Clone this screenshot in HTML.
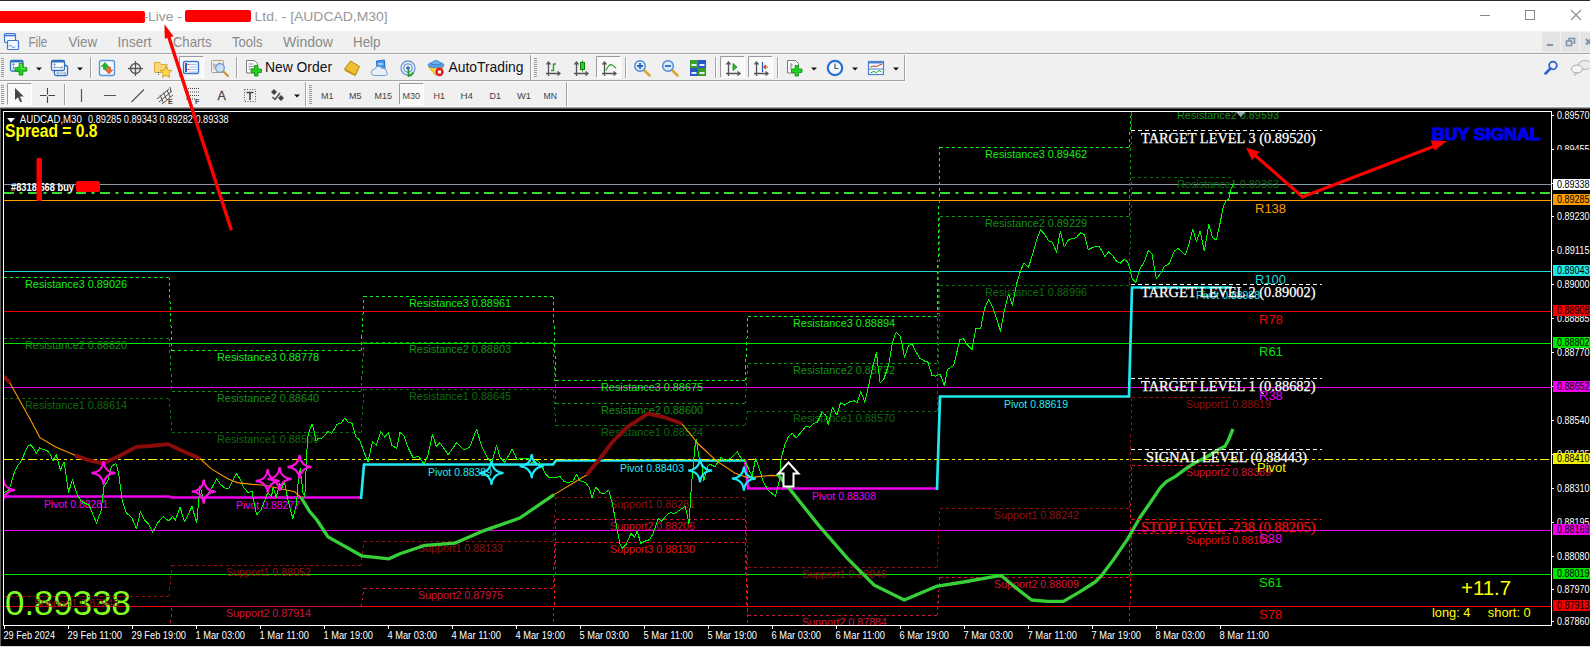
<!DOCTYPE html><html><head><meta charset="utf-8"><title>AUDCAD,M30</title><style>
html,body{margin:0;padding:0;}
body{width:1590px;height:647px;overflow:hidden;background:#f0f0f0;font-family:"Liberation Sans",sans-serif;position:relative;}
.abs{position:absolute;}
#title{left:0;top:0;width:1590px;height:31px;background:#fff;}
#topline{left:0;top:0;width:1590px;height:1px;background:#2b2b2b;}
.tt{position:absolute;top:7px;font-size:14px;color:#999;white-space:nowrap;line-height:18px;}
.mi{position:absolute;top:33px;font-size:13.5px;color:#8a8a8a;white-space:nowrap;line-height:18px;}
.tb{position:absolute;font-size:13.5px;color:#111;white-space:nowrap;line-height:18px;}
.tf{position:absolute;font-size:10px;color:#333;white-space:nowrap;line-height:12px;top:89px;}
svg{position:absolute;left:0;top:0;}
svg text{white-space:pre;}
</style></head><body>
<div id="title" class="abs"></div><div id="topline" class="abs"></div>
<div class="abs" style="left:0;top:11px;width:145px;height:12px;border-radius:0 2px 2px 0;background:#fe0000"></div>
<div class="abs" style="left:185px;top:10px;width:66px;height:12px;border-radius:2px;background:#fe0000"></div>
<svg width="1590" height="108" viewBox="0 0 1590 108" font-family="Liberation Sans, sans-serif">
<g font-size="13.3" fill="#979797">
<text x="143.5" y="20.800" textLength="38.3" lengthAdjust="spacingAndGlyphs">-Live -</text>
<text x="254.6" y="20.800" textLength="133" lengthAdjust="spacingAndGlyphs">Ltd. - [AUDCAD,M30]</text>
</g><g font-size="14.2" fill="#8a8a8a">
<text x="28.4" y="46.700" textLength="18.9" lengthAdjust="spacingAndGlyphs">File</text>
<text x="68.4" y="46.700" textLength="28.6" lengthAdjust="spacingAndGlyphs">View</text>
<text x="117.6" y="46.700" textLength="33.9" lengthAdjust="spacingAndGlyphs">Insert</text>
<text x="172.9" y="46.700" textLength="38.6" lengthAdjust="spacingAndGlyphs">Charts</text>
<text x="232" y="46.700" textLength="30.5" lengthAdjust="spacingAndGlyphs">Tools</text>
<text x="283" y="46.700" textLength="50" lengthAdjust="spacingAndGlyphs">Window</text>
<text x="353" y="46.700" textLength="27.5" lengthAdjust="spacingAndGlyphs">Help</text>
</g>
<g stroke="#8a8a8a" stroke-width="1" fill="none" shape-rendering="crispEdges">
<line x1="1480" y1="15.5" x2="1490" y2="15.5"/>
<rect x="1525.5" y="10.5" width="9" height="9"/>
</g>
<path d="M1571 10l10 10M1581 10l-10 10" stroke="#8a8a8a" stroke-width="1.1" fill="none"/>
<rect x="1542" y="32" width="18" height="20" fill="#e4e4e4"/><rect x="1561" y="32" width="18" height="20" fill="#e4e4e4"/><rect x="1580" y="32" width="10" height="20" fill="#e4e4e4"/>
<rect x="1547" y="44" width="6" height="2" fill="#7f93aa"/>
<g fill="none" stroke="#7f93aa" stroke-width="1.6"><rect x="1566.5" y="41" width="5" height="4.5"/><path d="M1569 40.5v-2h5.5v4.5h-2"/></g>
<path d="M1586 39l5 5.5m0-5.5l-5 5.5" stroke="#7f93aa" stroke-width="2" fill="none"/>
<rect x="0" y="53" width="1590" height="1" fill="#a3a3a3"/><rect x="0" y="54" width="1590" height="1" fill="#fdfdfd"/>
<rect x="0" y="80" width="905" height="1" fill="#a3a3a3"/><rect x="0" y="81" width="906" height="1" fill="#fdfdfd"/>
<g fill="#9a9a9a"><rect x="1" y="58" width="3" height="1"/><rect x="1" y="60" width="3" height="1"/><rect x="1" y="62" width="3" height="1"/><rect x="1" y="64" width="3" height="1"/><rect x="1" y="66" width="3" height="1"/><rect x="1" y="68" width="3" height="1"/><rect x="1" y="70" width="3" height="1"/><rect x="1" y="72" width="3" height="1"/><rect x="1" y="74" width="3" height="1"/><rect x="1" y="76" width="3" height="1"/></g>
<rect x="90" y="57" width="1" height="21" fill="#a3a3a3"/><rect x="91" y="57" width="1" height="21" fill="#fdfdfd"/>
<rect x="236" y="57" width="1" height="21" fill="#a3a3a3"/><rect x="237" y="57" width="1" height="21" fill="#fdfdfd"/>
<rect x="625" y="57" width="1" height="21" fill="#a3a3a3"/><rect x="626" y="57" width="1" height="21" fill="#fdfdfd"/>
<rect x="715" y="57" width="1" height="21" fill="#a3a3a3"/><rect x="716" y="57" width="1" height="21" fill="#fdfdfd"/>
<rect x="777" y="57" width="1" height="21" fill="#a3a3a3"/><rect x="778" y="57" width="1" height="21" fill="#fdfdfd"/>
<rect x="530" y="55" width="1" height="25" fill="#a3a3a3"/><rect x="531" y="55" width="1" height="25" fill="#fdfdfd"/>
<g fill="#9a9a9a"><rect x="534" y="58" width="3" height="1"/><rect x="534" y="60" width="3" height="1"/><rect x="534" y="62" width="3" height="1"/><rect x="534" y="64" width="3" height="1"/><rect x="534" y="66" width="3" height="1"/><rect x="534" y="68" width="3" height="1"/><rect x="534" y="70" width="3" height="1"/><rect x="534" y="72" width="3" height="1"/><rect x="534" y="74" width="3" height="1"/><rect x="534" y="76" width="3" height="1"/></g>
<rect x="904" y="55" width="1" height="26" fill="#a3a3a3"/><rect x="905" y="55" width="1" height="26" fill="#fdfdfd"/>
<g fill="#f4f8ff" stroke="#3f74d8" stroke-width="1.2"><rect x="4.5" y="33.5" width="11" height="9" rx="1"/><rect x="7.5" y="40.5" width="11" height="9" rx="1"/></g>
<path d="M9 46.500q1.500-3 3 0t3 0" fill="none" stroke="#3f74d8" stroke-width="1"/><path d="M4.500 35.500h11" stroke="#3f74d8" stroke-width="1.600"/>
<rect x="10.5" y="60.5" width="12.5" height="10.5" rx="1.5" fill="#fdfeff" stroke="#2f6fbe" stroke-width="1.300"/><path d="M10.500 61.700h12.5" stroke="#2f6fbe" stroke-width="1.600"/><path d="M13.500 63.500v5.500m-1.500-4l1.500-1.800 1.500 1.800m-3 2.500l1.500 1.800 1.500-1.800" stroke="#7a98b8" fill="none" stroke-width="0.900"/>
<path d="M19.100 63.500h3.800v3.900h3.900v3.800h-3.900v3.900h-3.800v-3.900h-3.900v-3.800h3.900z" fill="#1fd11f" stroke="#0a8a0a" stroke-width="0.800"/><path d="M20 64.500h1.200v4h4" stroke="#8af08a" stroke-width="0.800" fill="none"/>
<path d="M36 67.5h6l-3 3z" fill="#111"/>
<g fill="#fdfeff" stroke="#2f6fbe" stroke-width="1.300"><rect x="54.5" y="65.5" width="13" height="10" rx="1.5"/><rect x="51.5" y="60.5" width="13" height="10" rx="1.5"/></g><path d="M51.500 61.700h13" stroke="#2f6fbe" stroke-width="1.600"/><path d="M54.500 63.500v5M53.500 67.500h9M57 73h8.5" stroke="#7a98b8" stroke-width="0.900" fill="none"/><path d="M53.300 64.800l1.200-1.500 1.200 1.500M61.300 66.300l1.500 1.200-1.500 1.200M58.300 71.800l-1.500 1.200 1.500 1.200M64.300 71.800l1.500 1.200-1.500 1.200" stroke="#7a98b8" stroke-width="0.900" fill="none"/>
<path d="M77 67.5h6l-3 3z" fill="#111"/>
<rect x="99.5" y="60.5" width="15" height="15" rx="2" fill="#f4f8fe" stroke="#5a96dc" stroke-width="1.400"/><path d="M103.500 69.500v-3h-2.300l3.800-4 3.800 4h-2.300v3z" fill="#22b422" stroke="#0a800a" stroke-width="0.5"/><path d="M107.500 67v3h-2.300l3.800 4 3.800-4h-2.300v-3z" fill="#f06a30" stroke="#c03a10" stroke-width="0.5"/>
<g fill="none" stroke="#555" stroke-width="1.300"><circle cx="135.5" cy="68.5" r="5"/><path d="M135.500 61v15M128 68.500h15"/></g>
<path d="M154.500 62.500h5l1.500 2h6v8h-12.500z" fill="#f6d878" stroke="#d8a838" stroke-width="1"/><path d="M166 66.500l1.800 3.600 3.900.500-2.800 2.800.700 3.900-3.600-1.900-3.500 1.900.700-3.900-2.900-2.800 4-.500z" fill="#ffd84a" stroke="#c89820" stroke-width="0.900"/><path d="M158.500 72v4" stroke="#555" stroke-dasharray="1 1"/>
<rect x="179" y="56" width="25" height="22" fill="#f8f8f8"/><path d="M179.5 77.5V56.5H203.5" fill="none" stroke="#9c9c9c"/><path d="M179.5 77.5H203.5V56.5" fill="none" stroke="#fff"/>
<rect x="183.5" y="61.5" width="15" height="12" rx="1.5" fill="#fbfdff" stroke="#3c78c8" stroke-width="1.400"/><rect x="185" y="63" width="2" height="9" fill="#2a60b0"/><path d="M189 64.500h8M189 67h8M189 69.500h8M189 72h8" stroke="#9ab4e0" stroke-width="0.800"/><path d="M187.500 64.500h1.500M187.500 69.500h1.5" stroke="#e02020"/>
<rect x="211.5" y="60.5" width="12" height="12" rx="1" fill="#f4f0e8" stroke="#b0a080"/><path d="M214 63v6M219 62v6M213 65h8" stroke="#8a8a8a" stroke-width="0.800"/><circle cx="220" cy="68" r="4.300" fill="#c8dcf4" fill-opacity="0.850" stroke="#6a9ad8" stroke-width="1.300"/><path d="M223.500 71.500l4.500 4.5" stroke="#c8982a" stroke-width="2.200" stroke-linecap="round"/>
<path d="M246.500 60.500h8l3 3v9.500h-11z" fill="#fafafa" stroke="#7a7a7a"/><path d="M248.500 64h5M248.500 66.500h6M248.500 69h6" stroke="#9a9a9a"/><path d="M251 69h3.500v-3.500h3.500v3.500h3.500v3.500h-3.500v3.500h-3.500v-3.500h-3.500z" fill="#22d022" stroke="#0a900a" stroke-width="0.800"/>
<text x="265" y="72" font-size="13.800" fill="#10101a" textLength="67" lengthAdjust="spacingAndGlyphs">New Order</text>
<path d="M344.500 69l6-8 9 5.500-4 8.500z" fill="#f0c030" stroke="#b88410" stroke-width="1"/><path d="M344.500 69l11 6 .500 1.500-11-5.500z" fill="#c89018"/>
<path d="M376.500 61l8-1 .500 9-8 .500z" fill="#3a9af0" stroke="#2a70c8"/><path d="M378 64h5" stroke="#fff"/><path d="M374 75.500a3 3 0 0 1 .500-6 4 4 0 0 1 7.500-1 3.500 3.500 0 0 1 4.500 3.500 2 2 0 0 1-1 3.500z" fill="#e8f0fc" stroke="#7a9ad0" stroke-width="1"/>
<g fill="none" stroke="#6a9ad8" stroke-width="1.300"><circle cx="408" cy="68" r="7"/><circle cx="408" cy="68" r="4.200"/></g><circle cx="408" cy="68" r="1.800" fill="#2a60c8"/><path d="M408.500 69v7a7 7 0 0 0 5-3.5" fill="none" stroke="#30a030" stroke-width="1.800"/>
<path d="M428.500 67l7.500 8.500 7.500-8.500z" fill="#f8d040" stroke="#d8a020" stroke-width="0.800"/><ellipse cx="436" cy="65" rx="8" ry="2.800" fill="#5aa0e8" stroke="#3a78c8" stroke-width="0.800"/><path d="M431.500 64.500a4.500 4 0 0 1 9 0z" fill="#6ab0f0" stroke="#3a78c8" stroke-width="0.800"/><circle cx="439.5" cy="72" r="4.200" fill="#e02020"/><rect x="438" y="70.5" width="3" height="3" fill="#fff"/>
<text x="448.5" y="72" font-size="13.800" fill="#10101a" textLength="75" lengthAdjust="spacingAndGlyphs">AutoTrading</text>
<path d="M548.5 62v14M546 73.500h14M546.5 64.500l2-2.500 2 2.500M557.5 71.500l2.500 2-2.500 2" fill="none" stroke="#555" stroke-width="1.300"/>
<path d="M553.500 63.500v7.500M553.500 64h2.500M551 70.500h2.5" stroke="#20a020" stroke-width="1.400" fill="none"/>
<path d="M576.5 62v14M574 73.500h14M574.5 64.500l2-2.500 2 2.500M585.5 71.500l2.500 2-2.500 2" fill="none" stroke="#555" stroke-width="1.300"/>
<path d="M582.500 60.500v11" stroke="#108010"/><rect x="580.5" y="62.5" width="4" height="7" fill="#30d030" stroke="#108010"/>
<rect x="596" y="56" width="25" height="22" fill="#f8f8f8"/><path d="M596.5 77.5V56.5H620.5" fill="none" stroke="#9c9c9c"/><path d="M596.5 77.5H620.5V56.5" fill="none" stroke="#fff"/>
<path d="M604.5 62v14M602 73.500h14M602.5 64.500l2-2.500 2 2.500M613.5 71.500l2.500 2-2.500 2" fill="none" stroke="#555" stroke-width="1.300"/>
<path d="M606 70.500q3-7 6-5.500t4 3.5" stroke="#30a030" stroke-width="1.300" fill="none"/>
<path d="M644 70l5.500 5.5" stroke="#d8a828" stroke-width="2.600" stroke-linecap="round"/><circle cx="640" cy="66" r="5.300" fill="#dceafa" stroke="#4a88d8" stroke-width="1.400"/><path d="M637 66h6M640 63v6" stroke="#2a68c0" stroke-width="1.800"/>
<path d="M672 70l5.500 5.5" stroke="#d8a828" stroke-width="2.600" stroke-linecap="round"/><circle cx="668" cy="66" r="5.300" fill="#dceafa" stroke="#4a88d8" stroke-width="1.400"/><path d="M665 66h6" stroke="#2a68c0" stroke-width="1.800"/>
<rect x="690" y="60" width="8" height="8" fill="#38a028"/><rect x="698" y="60" width="8" height="8" fill="#2858c8"/><rect x="690" y="68" width="8" height="8" fill="#2858c8"/><rect x="698" y="68" width="8" height="8" fill="#38a028"/><path d="M691.500 65h5M699.500 65h5M691.500 73h5M699.500 73h5" stroke="#e8f0ff" stroke-width="2"/>
<rect x="720" y="56" width="25" height="22" fill="#f8f8f8"/><path d="M720.5 77.5V56.5H744.5" fill="none" stroke="#9c9c9c"/><path d="M720.5 77.5H744.5V56.5" fill="none" stroke="#fff"/>
<path d="M728.5 62v14M726 73.500h14M726.5 64.500l2-2.500 2 2.500M737.5 71.500l2.500 2-2.500 2" fill="none" stroke="#555" stroke-width="1.300"/>
<path d="M733 63.500l4 3.500-4 3.500z" fill="#30c030" stroke="#108010" stroke-width="0.800"/>
<rect x="748" y="56" width="25" height="22" fill="#f8f8f8"/><path d="M748.5 77.5V56.5H772.5" fill="none" stroke="#9c9c9c"/><path d="M748.5 77.5H772.5V56.5" fill="none" stroke="#fff"/>
<path d="M756.5 62v14M754 73.500h14M754.5 64.500l2-2.500 2 2.500M765.5 71.500l2.500 2-2.500 2" fill="none" stroke="#555" stroke-width="1.300"/>
<path d="M762.500 62v10" stroke="#2060c0" stroke-width="1.300"/><path d="M768 67h-4m2-2l-2 2 2 2" stroke="#d04010" stroke-width="1.200" fill="none"/>
<path d="M787.500 60.500h8l3 3v9.500h-11z" fill="#fafafa" stroke="#7a7a7a"/><path d="M791 63v7m0-5h2" stroke="#8a8a8a" fill="none"/><path d="M791.500 69h3.500v-3.500h3.500v3.500h3.500v3.500h-3.500v3.500h-3.500v-3.500h-3.500z" fill="#22d022" stroke="#0a900a" stroke-width="0.800"/>
<path d="M811 67.5h6l-3 3z" fill="#111"/>
<circle cx="835" cy="68" r="7.200" fill="#f4f8ff" stroke="#2a70d0" stroke-width="2.200"/><path d="M835 63.500v5h3.5" fill="none" stroke="#555" stroke-width="1.200"/>
<path d="M852 67.5h6l-3 3z" fill="#111"/>
<rect x="868.5" y="61.5" width="15" height="13" fill="#fafcff" stroke="#4a80d0" stroke-width="1.200"/><rect x="868" y="61" width="16" height="2.5" fill="#4a80d0"/><path d="M868.500 69h15" stroke="#4a80d0"/><path d="M870.500 67l3-1 3 .500 3-1.500 2.500-.5" stroke="#c03010" fill="none"/><path d="M870.500 73l3-1.500 3 1 2.500-2 2.500 1.5" stroke="#20a020" fill="none"/>
<path d="M893 67.5h6l-3 3z" fill="#111"/>
<circle cx="1553" cy="65.5" r="3.800" fill="none" stroke="#2a62d0" stroke-width="1.800"/><path d="M1550.500 68.500l-5 5" stroke="#2a62d0" stroke-width="2.600" stroke-linecap="round"/>
<ellipse cx="1585" cy="65" rx="6.5" ry="4.5" fill="#ececec" stroke="#b0b0b0"/><ellipse cx="1577" cy="69" rx="5.5" ry="4" fill="#f4f4f4" stroke="#a8a8a8"/><path d="M1575 72.500l-.500 3 3-2.500z" fill="#f4f4f4" stroke="#a8a8a8" stroke-width="0.800"/>
<g fill="#9a9a9a"><rect x="1" y="85" width="3" height="1"/><rect x="1" y="87" width="3" height="1"/><rect x="1" y="89" width="3" height="1"/><rect x="1" y="91" width="3" height="1"/><rect x="1" y="93" width="3" height="1"/><rect x="1" y="95" width="3" height="1"/><rect x="1" y="97" width="3" height="1"/><rect x="1" y="99" width="3" height="1"/><rect x="1" y="101" width="3" height="1"/><rect x="1" y="103" width="3" height="1"/></g>
<rect x="7" y="83" width="25" height="22" fill="#f8f8f8"/><path d="M7.5 104.5V83.5H31.5" fill="none" stroke="#9c9c9c"/><path d="M7.5 104.5H31.5V83.5" fill="none" stroke="#fff"/>
<path d="M15 88v12l3-2.800 2.300 5 1.800-.800-2.300-4.900h4z" fill="#444"/>
<path d="M47.500 88v15M40 95.500h15" stroke="#444" stroke-width="1.100"/><rect x="46.5" y="94.5" width="2" height="2" fill="#f0f0f0"/>
<rect x="64" y="84" width="1" height="21" fill="#a3a3a3"/><rect x="65" y="84" width="1" height="21" fill="#fdfdfd"/>
<path d="M81.500 89v13M104 95.500h12M131.500 102l12.500-12.5" stroke="#555" stroke-width="1.200" fill="none"/>
<path d="M157 99l12-10M159 102l13-11M162 104l11-9M160 95l3 7M163.500 92.500l3 7M167 90l3 7M170 87l1 5" stroke="#505050" stroke-width="1" fill="none"/><text x="168" y="104" font-size="7" font-weight="bold" fill="#444">E</text>
<path d="M186 88.500h14M186 92h14M186 95.500h14M186 99h9" stroke="#444" stroke-dasharray="1 1"/><text x="195" y="104" font-size="7" font-weight="bold" fill="#444">F</text>
<text x="217.5" y="100" font-size="12.5" fill="#4a4a4a" stroke="#4a4a4a" stroke-width="0.300">A</text>
<rect x="244.5" y="89.5" width="11" height="12" fill="none" stroke="#555" stroke-dasharray="1 1.5"/><path d="M246.500 92.500h7M250 92.500v7.5" stroke="#444" stroke-width="1.600"/>
<path d="M274 89l3 3-3 3-3-3z M281 95l3 3-3 3-3-3z" fill="#444"/><path d="M272.500 97l2.500 2.500 5-6.5" stroke="#444" stroke-width="1.400" fill="none"/>
<path d="M294 94.5h6l-3 3z" fill="#111"/>
<rect x="305" y="82" width="1" height="25" fill="#a3a3a3"/><rect x="306" y="82" width="1" height="25" fill="#fdfdfd"/>
<g fill="#9a9a9a"><rect x="309" y="85" width="3" height="1"/><rect x="309" y="87" width="3" height="1"/><rect x="309" y="89" width="3" height="1"/><rect x="309" y="91" width="3" height="1"/><rect x="309" y="93" width="3" height="1"/><rect x="309" y="95" width="3" height="1"/><rect x="309" y="97" width="3" height="1"/><rect x="309" y="99" width="3" height="1"/><rect x="309" y="101" width="3" height="1"/><rect x="309" y="103" width="3" height="1"/></g>
<rect x="399" y="83" width="25" height="22" fill="#f8f8f8"/><path d="M399.5 104.5V83.5H423.5" fill="none" stroke="#9c9c9c"/><path d="M399.5 104.5H423.5V83.5" fill="none" stroke="#fff"/>
<rect x="566" y="82" width="1" height="25" fill="#a3a3a3"/><rect x="567" y="82" width="1" height="25" fill="#fdfdfd"/>
<text x="321" y="98.5" font-size="9" fill="#444" textLength="12.5" lengthAdjust="spacingAndGlyphs">M1</text>
<text x="349" y="98.5" font-size="9" fill="#444" textLength="12.5" lengthAdjust="spacingAndGlyphs">M5</text>
<text x="374.5" y="98.5" font-size="9" fill="#444" textLength="17.5" lengthAdjust="spacingAndGlyphs">M15</text>
<text x="402.5" y="98.5" font-size="9" fill="#444" textLength="17.5" lengthAdjust="spacingAndGlyphs">M30</text>
<text x="433.5" y="98.5" font-size="9" fill="#444" textLength="11.5" lengthAdjust="spacingAndGlyphs">H1</text>
<text x="460.5" y="98.5" font-size="9" fill="#444" textLength="12.5" lengthAdjust="spacingAndGlyphs">H4</text>
<text x="489.5" y="98.5" font-size="9" fill="#444" textLength="11.5" lengthAdjust="spacingAndGlyphs">D1</text>
<text x="517" y="98.5" font-size="9" fill="#444" textLength="14" lengthAdjust="spacingAndGlyphs">W1</text>
<text x="543.5" y="98.5" font-size="9" fill="#444" textLength="13.5" lengthAdjust="spacingAndGlyphs">MN</text>
</svg>
<svg width="1590" height="647" viewBox="0 0 1590 647" font-family="Liberation Sans, sans-serif">
<rect x="0" y="107" width="1590" height="540" fill="#5a5a5a"/>
<rect x="0" y="106" width="1590" height="1" fill="#fbfbfb"/>
<rect x="0" y="107" width="1590" height="1" fill="#a0a0a0"/>
<rect x="1" y="109" width="1589" height="537" fill="#000"/>
<rect x="0" y="646" width="1590" height="1" fill="#d8d8d8"/>
<path d="M3.5 625.5V111.5H1551.5V625.5H3.5" fill="none" stroke="#fff" stroke-width="1" shape-rendering="crispEdges"/>
<defs><clipPath id="cc"><rect x="4" y="112" width="1547" height="513"/></clipPath></defs><g clip-path="url(#cc)">
<g shape-rendering="crispEdges">
<line x1="4" y1="184.5" x2="1551" y2="184.5" stroke="#8d99a6" stroke-width="1"/>
<line x1="4" y1="200.5" x2="1551" y2="200.5" stroke="#ff9c00" stroke-width="1"/>
<line x1="4" y1="271.5" x2="1551" y2="271.5" stroke="#1fd6d6" stroke-width="1"/>
<line x1="4" y1="311.5" x2="1551" y2="311.5" stroke="#f00000" stroke-width="1"/>
<line x1="4" y1="343.5" x2="1551" y2="343.5" stroke="#00e400" stroke-width="1"/>
<line x1="4" y1="387.5" x2="1551" y2="387.5" stroke="#e800e8" stroke-width="1"/>
<line x1="4" y1="530.5" x2="1551" y2="530.5" stroke="#e800e8" stroke-width="1"/>
<line x1="4" y1="574.5" x2="1551" y2="574.5" stroke="#00e400" stroke-width="1"/>
<line x1="4" y1="606.5" x2="1551" y2="606.5" stroke="#f00000" stroke-width="1"/>
</g>
<text x="5" y="615" fill="#80ff20" font-size="35" textLength="126" lengthAdjust="spacingAndGlyphs">0.89338</text>
<g fill="none" stroke-width="1" stroke-dasharray="3 3" shape-rendering="crispEdges">
<path d="M4 277.5H169" stroke="#14ee14"/>
<path d="M169 277.5L172 350.5M172 350.5H361" stroke="#14ee14"/>
<path d="M361 350.5L364 296.5M364 296.5H553" stroke="#14ee14"/>
<path d="M553 296.5L556 380.5M556 380.5H745" stroke="#14ee14"/>
<path d="M745 380.5L748 316.5M748 316.5H937" stroke="#14ee14"/>
<path d="M937 316.5L940 147.5M940 147.5H1129" stroke="#14ee14"/>
<path d="M4 338.5H169" stroke="#149014"/>
<path d="M169 338.5L172 391.5M172 391.5H361" stroke="#149014"/>
<path d="M361 391.5L364 342.5M364 342.5H553" stroke="#149014"/>
<path d="M553 342.5L556 403.5M556 403.5H745" stroke="#149014"/>
<path d="M745 403.5L748 363.5M748 363.5H937" stroke="#149014"/>
<path d="M937 363.5L940 216.5M940 216.5H1129" stroke="#149014"/>
<path d="M1129 216.5L1132 108.5M1132 108.5H1232" stroke="#149014"/>
<path d="M4 398.5H169" stroke="#0f6a0f"/>
<path d="M169 398.5L172 432.5M172 432.5H361" stroke="#0f6a0f"/>
<path d="M361 432.5L364 389.5M364 389.5H553" stroke="#0f6a0f"/>
<path d="M553 389.5L556 425.5M556 425.5H745" stroke="#0f6a0f"/>
<path d="M745 425.5L748 411.5M748 411.5H937" stroke="#0f6a0f"/>
<path d="M937 411.5L940 285.5M940 285.5H1129" stroke="#0f6a0f"/>
<path d="M1129 285.5L1132 177.5M1132 177.5H1232" stroke="#0f6a0f"/>
<path d="M4 596.5H169" stroke="#8a1414"/>
<path d="M169 596.5L172 565.5M172 565.5H361" stroke="#8a1414"/>
<path d="M361 565.5L364 541.5M364 541.5H553" stroke="#8a1414"/>
<path d="M553 541.5L556 497.5M556 497.5H745" stroke="#8a1414"/>
<path d="M745 497.5L748 567.5M748 567.5H937" stroke="#8a1414"/>
<path d="M937 567.5L940 508.5M940 508.5H1129" stroke="#8a1414"/>
<path d="M1129 508.5L1132 397.5M1132 397.5H1232" stroke="#8a1414"/>
<path d="M172 606.5H361" stroke="#d0143c"/>
<path d="M361 606.5L364 588.5M364 588.5H553" stroke="#d0143c"/>
<path d="M553 588.5L556 519.5M556 519.5H745" stroke="#d0143c"/>
<path d="M745 519.5L748 615.5M748 615.5H937" stroke="#d0143c"/>
<path d="M937 615.5L940 577.5M940 577.5H1129" stroke="#d0143c"/>
<path d="M1129 577.5L1132 465.5M1132 465.5H1232" stroke="#d0143c"/>
<path d="M556 542.5H745" stroke="#e01010"/>
<path d="M1132 533.5H1232" stroke="#e01010"/>
<path d="M169 640.5L172 606.5" stroke="#d0143c"/>
<path d="M553 640.5L556 542.5" stroke="#e01010"/>
<path d="M745 542.5L748 640.5" stroke="#e01010"/>
<path d="M1129 640.5L1132 533.5" stroke="#e01010"/>
<path d="M1129 147.5L1132 100.5" stroke="#14ee14"/>
</g>
<g font-size="10.5">
<text x="25" y="288" fill="#14ee14" textLength="102" lengthAdjust="spacingAndGlyphs">Resistance3 0.89026</text>
<text x="25" y="349" fill="#149014" textLength="102" lengthAdjust="spacingAndGlyphs">Resistance2 0.88820</text>
<text x="25" y="409" fill="#0f6a0f" textLength="102" lengthAdjust="spacingAndGlyphs">Resistance1 0.88614</text>
<text x="34" y="607" fill="#8a1414" textLength="85" lengthAdjust="spacingAndGlyphs">Support1 0.87948</text>
<text x="217" y="361" fill="#14ee14" textLength="102" lengthAdjust="spacingAndGlyphs">Resistance3 0.88778</text>
<text x="217" y="402" fill="#149014" textLength="102" lengthAdjust="spacingAndGlyphs">Resistance2 0.88640</text>
<text x="217" y="443" fill="#0f6a0f" textLength="102" lengthAdjust="spacingAndGlyphs">Resistance1 0.88500</text>
<text x="226" y="576" fill="#8a1414" textLength="85" lengthAdjust="spacingAndGlyphs">Support1 0.88052</text>
<text x="226" y="617" fill="#d0143c" textLength="85" lengthAdjust="spacingAndGlyphs">Support2 0.87914</text>
<text x="409" y="307" fill="#14ee14" textLength="102" lengthAdjust="spacingAndGlyphs">Resistance3 0.88961</text>
<text x="409" y="353" fill="#149014" textLength="102" lengthAdjust="spacingAndGlyphs">Resistance2 0.88803</text>
<text x="409" y="400" fill="#0f6a0f" textLength="102" lengthAdjust="spacingAndGlyphs">Resistance1 0.88645</text>
<text x="418" y="552" fill="#8a1414" textLength="85" lengthAdjust="spacingAndGlyphs">Support1 0.88133</text>
<text x="418" y="599" fill="#d0143c" textLength="85" lengthAdjust="spacingAndGlyphs">Support2 0.87975</text>
<text x="601" y="391" fill="#14ee14" textLength="102" lengthAdjust="spacingAndGlyphs">Resistance3 0.88675</text>
<text x="601" y="414" fill="#149014" textLength="102" lengthAdjust="spacingAndGlyphs">Resistance2 0.88600</text>
<text x="601" y="436" fill="#0f6a0f" textLength="102" lengthAdjust="spacingAndGlyphs">Resistance1 0.88524</text>
<text x="610" y="508" fill="#8a1414" textLength="85" lengthAdjust="spacingAndGlyphs">Support1 0.88281</text>
<text x="610" y="530" fill="#d0143c" textLength="85" lengthAdjust="spacingAndGlyphs">Support2 0.88206</text>
<text x="610" y="553" fill="#e01010" textLength="85" lengthAdjust="spacingAndGlyphs">Support3 0.88130</text>
<text x="793" y="327" fill="#14ee14" textLength="102" lengthAdjust="spacingAndGlyphs">Resistance3 0.88894</text>
<text x="793" y="374" fill="#149014" textLength="102" lengthAdjust="spacingAndGlyphs">Resistance2 0.88732</text>
<text x="793" y="422" fill="#0f6a0f" textLength="102" lengthAdjust="spacingAndGlyphs">Resistance1 0.88570</text>
<text x="802" y="578" fill="#8a1414" textLength="85" lengthAdjust="spacingAndGlyphs">Support1 0.88046</text>
<text x="802" y="626" fill="#d0143c" textLength="85" lengthAdjust="spacingAndGlyphs">Support2 0.87884</text>
<text x="985" y="158" fill="#14ee14" textLength="102" lengthAdjust="spacingAndGlyphs">Resistance3 0.89462</text>
<text x="985" y="227" fill="#149014" textLength="102" lengthAdjust="spacingAndGlyphs">Resistance2 0.89229</text>
<text x="985" y="296" fill="#0f6a0f" textLength="102" lengthAdjust="spacingAndGlyphs">Resistance1 0.88996</text>
<text x="994" y="519" fill="#8a1414" textLength="85" lengthAdjust="spacingAndGlyphs">Support1 0.88242</text>
<text x="994" y="588" fill="#d0143c" textLength="85" lengthAdjust="spacingAndGlyphs">Support2 0.88009</text>
<text x="1177" y="119" fill="#149014" textLength="102" lengthAdjust="spacingAndGlyphs">Resistance2 0.89593</text>
<text x="1177" y="188" fill="#0f6a0f" textLength="102" lengthAdjust="spacingAndGlyphs">Resistance1 0.89363</text>
<text x="1186" y="408" fill="#8a1414" textLength="85" lengthAdjust="spacingAndGlyphs">Support1 0.88619</text>
<text x="1186" y="476" fill="#d0143c" textLength="85" lengthAdjust="spacingAndGlyphs">Support2 0.88389</text>
<text x="1186" y="544" fill="#e01010" textLength="85" lengthAdjust="spacingAndGlyphs">Support3 0.88160</text>
</g>
<g fill="none" stroke-width="2.7" stroke-linejoin="miter" stroke-linecap="butt">
<path d="M4 496.5H169L172 497.5H361" stroke="#ee00ee"/>
<path d="M361 499.0L364 464.5H553L556 460.5H745" stroke="#22e8f0"/>
<path d="M745 459.0L748 488.5H937" stroke="#ee00ee"/>
<path d="M937 490.0L940 396.5H1129L1132 287.5H1232" stroke="#22e8f0"/>
</g>
<g font-size="10.5">
<text x="44" y="508.0" fill="#ee00ee" textLength="64" lengthAdjust="spacingAndGlyphs">Pivot 0.88281</text>
<text x="236" y="509.0" fill="#ee00ee" textLength="64" lengthAdjust="spacingAndGlyphs">Pivot 0.88277</text>
<text x="428" y="476.0" fill="#22e8f0" textLength="64" lengthAdjust="spacingAndGlyphs">Pivot 0.88389</text>
<text x="620" y="472.0" fill="#22e8f0" textLength="64" lengthAdjust="spacingAndGlyphs">Pivot 0.88403</text>
<text x="812" y="500.0" fill="#ee00ee" textLength="64" lengthAdjust="spacingAndGlyphs">Pivot 0.88308</text>
<text x="1004" y="408.0" fill="#22e8f0" textLength="64" lengthAdjust="spacingAndGlyphs">Pivot 0.88619</text>
<text x="1196" y="299.0" fill="#22e8f0" textLength="64" lengthAdjust="spacingAndGlyphs">Pivot 0.88988</text>
</g>
<line x1="4" y1="193" x2="1551" y2="193" stroke="#32dc32" stroke-width="2" stroke-dasharray="10 5.5 3 5.5"/>
<line x1="4" y1="459.5" x2="1551" y2="459.5" stroke="#f8f800" stroke-width="1" stroke-dasharray="9 3 3 3 3 3" shape-rendering="crispEdges"/>
<polyline points="4.0,492.0 4.6,492.4 9.3,489.6 13.9,473.8 17.6,465.5 20.4,462.7 27.8,446.0 30.6,445.0 33.4,447.8 36.2,453.4 39.9,447.8 43.6,449.7 47.3,450.6 50.1,454.3 52.9,460.8 56.2,454.3 60.3,470.1 64.0,461.7 68.6,492.4 72.4,479.4 77.0,494.2 81.6,501.6 89.1,505.3 96.5,523.0 101.1,510.9 103.9,486.8 107.6,481.2 111.3,466.4 116.0,463.6 118.7,473.8 122.4,501.6 126.2,512.8 131.7,517.4 136.4,528.5 140.4,511.8 144.7,520.2 148.4,523.9 152.5,532.2 157.7,523.0 163.3,516.5 168.8,521.1 172.5,516.5 175.3,520.2 180.0,507.2 184.6,522.0 192.0,506.3 196.7,523.0 200.0,486.3 203.7,500.2 211.1,489.1 216.7,478.8 220.4,484.4 225.0,488.1 228.8,488.1 236.2,473.3 239.9,478.8 243.6,487.2 248.2,492.8 251.9,490.9 256.6,515.0 261.2,509.5 267.7,492.8 271.4,496.5 273.3,487.2 276.1,497.4 279.8,483.5 281.6,489.1 284.4,481.6 287.2,496.5 292.8,518.7 296.5,503.9 298.3,479.8 300.2,468.6 303.0,492.8 304.8,496.5 307.6,437.1 310.4,427.8 312.2,424.1 314.1,431.5 316.0,440.8 318.7,438.0 322.4,438.0 328.0,431.5 331.7,433.4 337.3,424.1 341.0,423.2 344.7,418.2 348.4,422.3 352.1,423.2 355.8,437.1 359.6,439.9 363.3,450.1 367.9,462.2 372.5,441.7 376.3,445.5 380.9,431.5 384.6,437.1 388.3,432.5 392.0,445.5 396.7,448.2 400.0,432.5 403.7,435.3 408.3,448.2 413.0,457.5 418.6,456.6 424.1,464.0 427.8,455.7 432.5,434.3 436.2,446.4 439.9,442.7 448.2,454.7 456.6,442.7 464.0,450.1 469.6,447.3 476.6,429.1 481.6,446.4 487.2,457.5 491.8,462.2 496.5,445.5 500.2,457.5 504.8,462.2 512.2,449.2 516.9,459.4 522.4,458.4 528.0,458.4 531.7,463.1 537.3,460.3 541.0,464.0 545.6,474.2 549.4,477.9 555.8,477.9 559.6,476.1 564.2,481.6 568.8,482.6 573.5,480.7 576.3,474.2 580.0,480.7 585.5,482.6 589.2,487.2 592.0,498.3 595.7,487.2 598.5,490.0 600.0,492.7 603.7,493.9 608.7,490.2 612.4,503.8 616.1,523.6 619.8,543.4 622.2,548.3 626.0,544.6 630.9,533.5 634.6,537.2 637.1,531.0 640.8,543.4 645.7,540.9 649.4,539.7 653.2,533.5 658.1,518.7 661.8,521.1 666.7,515.0 670.5,512.5 674.2,513.7 681.6,508.8 685.3,506.3 689.0,523.6 691.5,484.1 695.2,444.5 696.4,439.6 698.9,456.9 701.4,461.8 703.8,480.3 707.5,466.7 710.0,464.3 715.0,466.7 721.1,456.9 724.8,460.6 731.0,458.1 737.2,451.9 740.9,458.1 744.6,460.6 748.3,468.0 752.0,476.6 755.7,458.1 759.5,469.2 763.2,481.6 768.1,490.2 775.5,496.4 779.2,481.6 781.2,458.2 784.9,444.6 788.7,436.0 792.4,433.5 796.1,437.9 801.0,432.3 806.0,426.1 809.7,427.3 813.4,423.6 817.1,422.4 822.0,412.5 825.7,415.0 828.2,424.8 832.4,407.5 836.9,415.0 840.6,402.6 844.3,405.1 850.5,401.4 854.2,400.9 857.1,402.6 860.8,391.5 864.8,402.1 869.0,384.1 872.7,366.7 876.4,352.4 880.1,382.8 883.8,379.1 888.8,364.3 892.5,342.0 896.2,332.1 899.9,335.8 901.9,343.3 904.4,357.4 908.6,345.7 912.3,344.0 916.0,351.9 919.7,358.1 924.6,361.1 927.8,361.8 932.0,375.4 935.7,376.1 940.2,374.2 944.4,386.0 947.3,369.5 953.5,365.7 956.0,355.9 959.7,339.8 963.4,338.6 967.1,344.7 972.0,349.7 975.7,328.7 980.7,328.2 984.4,308.9 988.6,299.5 993.0,307.7 1000.5,331.1 1004.2,311.4 1008.6,294.1 1012.3,305.2 1016.5,284.2 1020.2,271.8 1023.9,263.2 1028.4,267.4 1032.6,254.5 1036.3,240.9 1040.5,229.8 1045.0,234.7 1048.7,240.9 1052.4,242.1 1056.6,252.5 1060.3,231.0 1064.2,247.1 1068.4,239.7 1075.9,237.9 1080.8,232.7 1084.5,234.7 1088.2,249.6 1093.2,247.1 1099.3,246.6 1105.0,256.5 1108.5,252.0 1112.9,255.7 1116.7,261.4 1120.4,263.2 1124.1,259.4 1127.8,261.9 1130.0,269.3 1132.1,278.4 1135.8,282.2 1139.6,269.8 1144.5,261.1 1148.2,250.8 1151.9,253.7 1156.4,278.9 1160.6,273.5 1164.3,266.6 1169.2,263.6 1174.2,251.2 1177.9,248.3 1185.3,255.0 1189.0,243.8 1192.7,229.0 1196.4,241.4 1200.1,231.0 1204.3,250.8 1208.8,224.5 1212.5,237.7 1216.2,240.1 1219.9,224.1 1223.6,205.5 1226.1,200.6 1228.6,199.3 1231.0,189.4 1233.5,183.3" fill="none" stroke="#00f800" stroke-width="1" stroke-linejoin="round" shape-rendering="crispEdges"/>
<polyline points="4.0,376.3 9.8,382.8" fill="none" stroke="#8b0a0a" stroke-width="3.8" stroke-linejoin="round" stroke-linecap="butt"/>
<polyline points="9.8,382.8 13.0,388.5 30.6,420.0 39.9,437.6 55.7,446.9 75.1,455.3" fill="none" stroke="#ff9a00" stroke-width="1.1"/>
<polyline points="75.1,455.3 87.2,459.9 103.0,463.6 118.7,456.2 136.4,446.9 150.3,446.0 167.9,444.1 183.7,451.5 200.0,458.5" fill="none" stroke="#8b0a0a" stroke-width="3.8" stroke-linejoin="round" stroke-linecap="butt"/>
<polyline points="200.0,458.5 211.0,468.6 227.8,478.8 237.0,482.6 252.0,484.4 265.0,485.3 281.6,489.0 294.6,491.8 301.0,497.4" fill="none" stroke="#ff9a00" stroke-width="1.1"/>
<polyline points="301.0,497.4 309.5,511.3 316.9,520.0 328.0,536.9 361.6,555.8 389.0,558.8 400.0,553.7 425.2,545.3 454.7,543.2 484.1,530.6 519.8,518.0 554.0,494.6" fill="none" stroke="#38d038" stroke-width="3.3" stroke-linejoin="round" stroke-linecap="butt"/>
<polyline points="554.0,494.6 586.5,475.0" fill="none" stroke="#ff9a00" stroke-width="1.1"/>
<polyline points="586.5,475.0 600.0,458.5 612.4,442.0 627.2,427.2 648.0,413.6 664.3,417.3 681.6,423.5" fill="none" stroke="#8b0a0a" stroke-width="3.8" stroke-linejoin="round" stroke-linecap="butt"/>
<polyline points="681.6,423.5 698.9,444.5 716.2,460.6 734.7,472.9 748.3,477.9 758.2,476.6 770.6,475.4 777.0,475.6" fill="none" stroke="#ff9a00" stroke-width="1.1"/>
<polyline points="777.0,473.5 790.0,489.4 818.9,525.6 847.9,558.9 873.9,584.9 904.3,600.0 936.1,586.4 963.6,582.0 992.5,576.8 1001.2,575.6 1014.2,586.4 1031.6,600.0 1047.5,601.4 1063.4,601.4 1079.3,592.1 1095.2,582.0 1101.0,576.2 1114.0,558.9 1127.7,538.9 1140.1,517.3 1150.9,501.8 1160.2,487.9 1166.4,481.7 1175.6,476.3 1184.9,469.4 1194.2,463.2 1206.6,457.0 1218.9,449.3 1225.1,446.2 1228.4,440.0 1233.0,429.0" fill="none" stroke="#38d038" stroke-width="3.3" stroke-linejoin="round" stroke-linecap="butt"/>
<path d="M3 478Q3.9 489.1 15 490Q3.9 490.9 3 502Q2.1 490.9 -9 490Q2.1 489.1 3 478Z" fill="none" stroke="#ff10e0" stroke-width="2" stroke-linejoin="miter"/>
<path d="M103.5 461Q104.4 472.1 115.5 473Q104.4 473.9 103.5 485Q102.6 473.9 91.5 473Q102.6 472.1 103.5 461Z" fill="none" stroke="#ff10e0" stroke-width="2" stroke-linejoin="miter"/>
<path d="M203.7 479.6Q204.6 490.70000000000005 215.7 491.6Q204.6 492.5 203.7 503.6Q202.79999999999998 492.5 191.7 491.6Q202.79999999999998 490.70000000000005 203.7 479.6Z" fill="none" stroke="#ff10e0" stroke-width="2" stroke-linejoin="miter"/>
<path d="M267.7 469Q268.59999999999997 480.1 279.7 481Q268.59999999999997 481.9 267.7 493Q266.8 481.9 255.7 481Q266.8 480.1 267.7 469Z" fill="none" stroke="#ff10e0" stroke-width="2" stroke-linejoin="miter"/>
<path d="M279.6 467Q280.5 478.1 291.6 479Q280.5 479.9 279.6 491Q278.70000000000005 479.9 267.6 479Q278.70000000000005 478.1 279.6 467Z" fill="none" stroke="#ff10e0" stroke-width="2" stroke-linejoin="miter"/>
<path d="M299.5 454.9Q300.4 466.0 311.5 466.9Q300.4 467.79999999999995 299.5 478.9Q298.6 467.79999999999995 287.5 466.9Q298.6 466.0 299.5 454.9Z" fill="none" stroke="#ff10e0" stroke-width="2" stroke-linejoin="miter"/>
<path d="M491.5 460.9Q492.4 472.0 503.5 472.9Q492.4 473.79999999999995 491.5 484.9Q490.6 473.79999999999995 479.5 472.9Q490.6 472.0 491.5 460.9Z" fill="none" stroke="#20e8f8" stroke-width="2" stroke-linejoin="miter"/>
<path d="M531.7 454.2Q532.6 465.3 543.7 466.2Q532.6 467.09999999999997 531.7 478.2Q530.8000000000001 467.09999999999997 519.7 466.2Q530.8000000000001 465.3 531.7 454.2Z" fill="none" stroke="#20e8f8" stroke-width="2" stroke-linejoin="miter"/>
<path d="M700.1 458.5Q701.0 469.6 712.1 470.5Q701.0 471.4 700.1 482.5Q699.2 471.4 688.1 470.5Q699.2 469.6 700.1 458.5Z" fill="none" stroke="#20e8f8" stroke-width="2" stroke-linejoin="miter"/>
<path d="M743.9 466.6Q744.8 477.70000000000005 755.9 478.6Q744.8 479.5 743.9 490.6Q743.0 479.5 731.9 478.6Q743.0 477.70000000000005 743.9 466.6Z" fill="none" stroke="#20e8f8" stroke-width="2" stroke-linejoin="miter"/>
<path d="M788.5 462.5L798.5 473.5H793.5V486.5H783.5V473.5H778.5Z" fill="#000" stroke="#fff" stroke-width="2" stroke-linejoin="miter"/>
<line x1="1131" y1="130.5" x2="1322" y2="130.5" stroke="#fff" stroke-width="1" stroke-dasharray="4 3" shape-rendering="crispEdges"/>
<text x="1141" y="143" fill="#fff" font-family="Liberation Serif, serif" font-size="14.5" stroke="#fff" stroke-width="0.25" textLength="174.5" lengthAdjust="spacingAndGlyphs">TARGET LEVEL 3 (0.89520)</text>
<line x1="1131" y1="284.5" x2="1322" y2="284.5" stroke="#fff" stroke-width="1" stroke-dasharray="4 3" shape-rendering="crispEdges"/>
<text x="1141" y="297" fill="#fff" font-family="Liberation Serif, serif" font-size="14.5" stroke="#fff" stroke-width="0.25" textLength="174.5" lengthAdjust="spacingAndGlyphs">TARGET LEVEL 2 (0.89002)</text>
<line x1="1131" y1="378.5" x2="1322" y2="378.5" stroke="#fff" stroke-width="1" stroke-dasharray="4 3" shape-rendering="crispEdges"/>
<text x="1141" y="391" fill="#fff" font-family="Liberation Serif, serif" font-size="14.5" stroke="#fff" stroke-width="0.25" textLength="174.5" lengthAdjust="spacingAndGlyphs">TARGET LEVEL 1 (0.88682)</text>
<line x1="1131" y1="449.5" x2="1322" y2="449.5" stroke="#fff" stroke-width="1" stroke-dasharray="4 3" shape-rendering="crispEdges"/>
<text x="1146" y="462" fill="#fff" font-family="Liberation Serif, serif" font-size="14.5" stroke="#fff" stroke-width="0.25" textLength="161" lengthAdjust="spacingAndGlyphs">SIGNAL LEVEL (0.88443)</text>
<line x1="1131" y1="519.5" x2="1322" y2="519.5" stroke="#f01010" stroke-width="1" stroke-dasharray="4 3" shape-rendering="crispEdges"/>
<text x="1141" y="532" fill="#f01010" font-family="Liberation Serif, serif" font-size="14.5" stroke="#f01010" stroke-width="0.25" textLength="174.5" lengthAdjust="spacingAndGlyphs">STOP LEVEL -238 (0.88205)</text>
<text x="1255" y="213" fill="#ff9c00" font-size="13">R138</text>
<text x="1255" y="284" fill="#1fd6d6" font-size="13">R100</text>
<text x="1259" y="324" fill="#f00000" font-size="13">R78</text>
<text x="1259" y="356" fill="#00e400" font-size="13">R61</text>
<text x="1259" y="400" fill="#e800e8" font-size="13">R38</text>
<text x="1257" y="472" fill="#f0f000" font-size="13">Pivot</text>
<text x="1259" y="543" fill="#e800e8" font-size="13">S38</text>
<text x="1259" y="587" fill="#00e400" font-size="13">S61</text>
<text x="1259" y="619" fill="#f00000" font-size="13">S78</text>
</g>
<path d="M1236 112h9.5l-4.750 5z" fill="#98a4b2"/>
<path d="M7 118h8l-4 4.5z" fill="#fff"/>
<text x="19.8" y="123" fill="#fff" font-size="10" textLength="62" lengthAdjust="spacingAndGlyphs">AUDCAD,M30</text>
<text x="88" y="123" fill="#fff" font-size="10" textLength="140.7" lengthAdjust="spacingAndGlyphs">0.89285 0.89343 0.89282 0.89338</text>
<text x="5" y="136.5" fill="#ffff00" font-size="17.5" font-weight="bold" textLength="92.5" lengthAdjust="spacingAndGlyphs">Spread = 0.8</text>
<text x="1461" y="595" fill="#ffff00" font-size="20.5" textLength="50" lengthAdjust="spacingAndGlyphs">+11.7</text>
<text x="1432" y="617" fill="#ffff00" font-size="13.5" textLength="38.5" lengthAdjust="spacingAndGlyphs">long: 4</text>
<text x="1487.8" y="617" fill="#ffff00" font-size="13.5" textLength="43" lengthAdjust="spacingAndGlyphs">short: 0</text>
<text x="1432" y="140" fill="#0000f0" font-size="16" font-weight="bold" stroke="#0000f0" stroke-width="1.1" textLength="108.5" lengthAdjust="spacingAndGlyphs">BUY SIGNAL</text>
<text x="11" y="191" fill="#fff" font-size="10" font-weight="bold" textLength="63" lengthAdjust="spacingAndGlyphs">#8318 568 buy</text>
<rect x="36.5" y="158" width="5.5" height="43" rx="1.5" fill="#fe0000"/>
<rect x="76" y="181" width="24" height="11" rx="2" fill="#fe0000"/>
<g font-size="10" fill="#fff">
<rect x="1552" y="115" width="2" height="1" fill="#fff"/>
<text x="1557" y="119.2" textLength="32.5" lengthAdjust="spacingAndGlyphs">0.89570</text>
<rect x="1552" y="149" width="2" height="1" fill="#fff"/>
<text x="1557" y="153.2" textLength="32.5" lengthAdjust="spacingAndGlyphs">0.89455</text>
<rect x="1552" y="183" width="2" height="1" fill="#fff"/>
<text x="1557" y="187.2" textLength="32.5" lengthAdjust="spacingAndGlyphs">0.89340</text>
<rect x="1552" y="216" width="2" height="1" fill="#fff"/>
<text x="1557" y="220.2" textLength="32.5" lengthAdjust="spacingAndGlyphs">0.89230</text>
<rect x="1552" y="250" width="2" height="1" fill="#fff"/>
<text x="1557" y="254.2" textLength="32.5" lengthAdjust="spacingAndGlyphs">0.89115</text>
<rect x="1552" y="284" width="2" height="1" fill="#fff"/>
<text x="1557" y="288.2" textLength="32.5" lengthAdjust="spacingAndGlyphs">0.89000</text>
<rect x="1552" y="318" width="2" height="1" fill="#fff"/>
<text x="1557" y="322.2" textLength="32.5" lengthAdjust="spacingAndGlyphs">0.88885</text>
<rect x="1552" y="352" width="2" height="1" fill="#fff"/>
<text x="1557" y="356.2" textLength="32.5" lengthAdjust="spacingAndGlyphs">0.88770</text>
<rect x="1552" y="386" width="2" height="1" fill="#fff"/>
<text x="1557" y="390.2" textLength="32.5" lengthAdjust="spacingAndGlyphs">0.88655</text>
<rect x="1552" y="420" width="2" height="1" fill="#fff"/>
<text x="1557" y="424.2" textLength="32.5" lengthAdjust="spacingAndGlyphs">0.88540</text>
<rect x="1552" y="454" width="2" height="1" fill="#fff"/>
<text x="1557" y="458.2" textLength="32.5" lengthAdjust="spacingAndGlyphs">0.88425</text>
<rect x="1552" y="488" width="2" height="1" fill="#fff"/>
<text x="1557" y="492.2" textLength="32.5" lengthAdjust="spacingAndGlyphs">0.88310</text>
<rect x="1552" y="522" width="2" height="1" fill="#fff"/>
<text x="1557" y="526.2" textLength="32.5" lengthAdjust="spacingAndGlyphs">0.88195</text>
<rect x="1552" y="556" width="2" height="1" fill="#fff"/>
<text x="1557" y="560.2" textLength="32.5" lengthAdjust="spacingAndGlyphs">0.88080</text>
<rect x="1552" y="589" width="2" height="1" fill="#fff"/>
<text x="1557" y="593.2" textLength="32.5" lengthAdjust="spacingAndGlyphs">0.87970</text>
<rect x="1552" y="621" width="2" height="1" fill="#fff"/>
<text x="1557" y="625.2" textLength="32.5" lengthAdjust="spacingAndGlyphs">0.87860</text>
</g>
<rect x="1556" y="150" width="34" height="6" fill="#000"/>
<g font-size="10" fill="#000">
<rect x="1553" y="179" width="37" height="11" fill="#fff"/>
<text x="1557" y="188.2" textLength="32.5" lengthAdjust="spacingAndGlyphs">0.89338</text>
<rect x="1553" y="194" width="37" height="11" fill="#ff9c00"/>
<text x="1557" y="203.2" textLength="32.5" lengthAdjust="spacingAndGlyphs">0.89285</text>
<rect x="1553" y="265" width="37" height="11" fill="#1fe6e6"/>
<text x="1557" y="274.2" textLength="32.5" lengthAdjust="spacingAndGlyphs">0.89043</text>
<rect x="1553" y="305" width="37" height="11" fill="#f00000"/>
<text x="1557" y="314.2" textLength="32.5" lengthAdjust="spacingAndGlyphs">0.88908</text>
<rect x="1553" y="337" width="37" height="11" fill="#00e400"/>
<text x="1557" y="346.2" textLength="32.5" lengthAdjust="spacingAndGlyphs">0.88802</text>
<rect x="1553" y="381" width="37" height="11" fill="#f000f0"/>
<text x="1557" y="390.2" textLength="32.5" lengthAdjust="spacingAndGlyphs">0.88652</text>
<rect x="1553" y="453" width="37" height="11" fill="#f0f000"/>
<text x="1557" y="462.2" textLength="32.5" lengthAdjust="spacingAndGlyphs">0.88410</text>
<rect x="1553" y="524" width="37" height="11" fill="#f000f0"/>
<text x="1557" y="533.2" textLength="32.5" lengthAdjust="spacingAndGlyphs">0.88169</text>
<rect x="1553" y="568" width="37" height="11" fill="#00e400"/>
<text x="1557" y="577.2" textLength="32.5" lengthAdjust="spacingAndGlyphs">0.88019</text>
<rect x="1553" y="600" width="37" height="11" fill="#f00000"/>
<text x="1557" y="609.2" textLength="32.5" lengthAdjust="spacingAndGlyphs">0.87913</text>
</g>
<g font-size="10.5" fill="#fff">
<rect x="4" y="626" width="1" height="3" fill="#fff"/>
<text x="3.5" y="638.5" textLength="51.5" lengthAdjust="spacingAndGlyphs">29 Feb 2024</text>
<rect x="68" y="626" width="1" height="3" fill="#fff"/>
<text x="67.5" y="638.5" textLength="54.5" lengthAdjust="spacingAndGlyphs">29 Feb 11:00</text>
<rect x="132" y="626" width="1" height="3" fill="#fff"/>
<text x="131.5" y="638.5" textLength="54.5" lengthAdjust="spacingAndGlyphs">29 Feb 19:00</text>
<rect x="196" y="626" width="1" height="3" fill="#fff"/>
<text x="195.5" y="638.5" textLength="49.5" lengthAdjust="spacingAndGlyphs">1 Mar 03:00</text>
<rect x="260" y="626" width="1" height="3" fill="#fff"/>
<text x="259.5" y="638.5" textLength="49.5" lengthAdjust="spacingAndGlyphs">1 Mar 11:00</text>
<rect x="324" y="626" width="1" height="3" fill="#fff"/>
<text x="323.5" y="638.5" textLength="49.5" lengthAdjust="spacingAndGlyphs">1 Mar 19:00</text>
<rect x="388" y="626" width="1" height="3" fill="#fff"/>
<text x="387.5" y="638.5" textLength="49.5" lengthAdjust="spacingAndGlyphs">4 Mar 03:00</text>
<rect x="452" y="626" width="1" height="3" fill="#fff"/>
<text x="451.5" y="638.5" textLength="49.5" lengthAdjust="spacingAndGlyphs">4 Mar 11:00</text>
<rect x="516" y="626" width="1" height="3" fill="#fff"/>
<text x="515.5" y="638.5" textLength="49.5" lengthAdjust="spacingAndGlyphs">4 Mar 19:00</text>
<rect x="580" y="626" width="1" height="3" fill="#fff"/>
<text x="579.5" y="638.5" textLength="49.5" lengthAdjust="spacingAndGlyphs">5 Mar 03:00</text>
<rect x="644" y="626" width="1" height="3" fill="#fff"/>
<text x="643.5" y="638.5" textLength="49.5" lengthAdjust="spacingAndGlyphs">5 Mar 11:00</text>
<rect x="708" y="626" width="1" height="3" fill="#fff"/>
<text x="707.5" y="638.5" textLength="49.5" lengthAdjust="spacingAndGlyphs">5 Mar 19:00</text>
<rect x="772" y="626" width="1" height="3" fill="#fff"/>
<text x="771.5" y="638.5" textLength="49.5" lengthAdjust="spacingAndGlyphs">6 Mar 03:00</text>
<rect x="836" y="626" width="1" height="3" fill="#fff"/>
<text x="835.5" y="638.5" textLength="49.5" lengthAdjust="spacingAndGlyphs">6 Mar 11:00</text>
<rect x="900" y="626" width="1" height="3" fill="#fff"/>
<text x="899.5" y="638.5" textLength="49.5" lengthAdjust="spacingAndGlyphs">6 Mar 19:00</text>
<rect x="964" y="626" width="1" height="3" fill="#fff"/>
<text x="963.5" y="638.5" textLength="49.5" lengthAdjust="spacingAndGlyphs">7 Mar 03:00</text>
<rect x="1028" y="626" width="1" height="3" fill="#fff"/>
<text x="1027.5" y="638.5" textLength="49.5" lengthAdjust="spacingAndGlyphs">7 Mar 11:00</text>
<rect x="1092" y="626" width="1" height="3" fill="#fff"/>
<text x="1091.5" y="638.5" textLength="49.5" lengthAdjust="spacingAndGlyphs">7 Mar 19:00</text>
<rect x="1156" y="626" width="1" height="3" fill="#fff"/>
<text x="1155.5" y="638.5" textLength="49.5" lengthAdjust="spacingAndGlyphs">8 Mar 03:00</text>
<rect x="1220" y="626" width="1" height="3" fill="#fff"/>
<text x="1219.5" y="638.5" textLength="49.5" lengthAdjust="spacingAndGlyphs">8 Mar 11:00</text>
</g>
<g stroke="#fe0000" stroke-width="3.2" stroke-linecap="round" fill="#fe0000">
<line x1="168.5" y1="36" x2="231" y2="229" stroke-width="3.4"/>
<path d="M164.4 24.300L173.500 36.300L164.800 38.800z" stroke="none"/>
<line x1="1302.4" y1="196.9" x2="1255" y2="155.300"/>
<path d="M1246 147.400L1259.600 151.700L1252 160.300z" stroke="none"/>
<line x1="1302.4" y1="196.9" x2="1436" y2="145.5"/>
<path d="M1447 141l-12.5 9.5-3.800-10z" stroke="none"/>
</g>
</svg>
</body></html>
